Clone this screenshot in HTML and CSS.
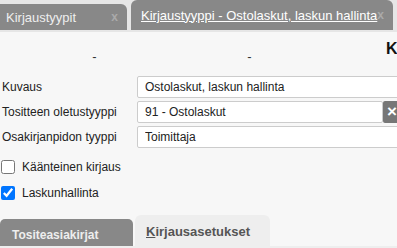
FILE: index.html
```html
<!DOCTYPE html>
<html lang="fi">
<head>
    <meta charset="UTF-8">
    <meta name="viewport" content="width=device-width, initial-scale=1.0">
    <title>Kirjaustyypit</title>
    <link rel="stylesheet" href="styles.css">
</head>
<body>
    <div class="page">
        <div class="tabbar">
            <div class="tab">
                <span class="tab-title">Kirjaustyypit</span>
                <span class="tab-close">x</span>
            </div>
            <div class="tab tab-active">
                <span class="tab-title">Kirjaustyyppi - Ostolaskut, laskun hallinta</span>
                <span class="tab-close">x</span>
            </div>
        </div>

        <div class="summary">
            <div class="summary-cell">-</div>
            <div class="summary-cell">-</div>
            <div class="summary-title">Koko</div>
        </div>

        <div class="form">
            <label class="form-label">Kuvaus</label>
            <div class="field">
                <input class="input" type="text" value="Ostolaskut, laskun hallinta">
            </div>

            <label class="form-label">Tositteen oletustyyppi</label>
            <div class="field">
                <input class="input" type="text" value="91 - Ostolaskut">
                <button class="clear-btn">&times;</button>
            </div>

            <label class="form-label">Osakirjanpidon tyyppi</label>
            <div class="field">
                <input class="input" type="text" value="Toimittaja">
            </div>
        </div>

        <div class="checks">
            <label class="check"><input type="checkbox"> Käänteinen kirjaus</label>
            <label class="check"><input type="checkbox" checked> Laskunhallinta</label>
        </div>

        <div class="subtabs">
            <div class="subtab">Tositeasiakirjat</div>
            <div class="subtab subtab-active"><u>K</u>irjausasetukset</div>
        </div>
    </div>
</body>
</html>
```

FILE: styles.css
```css
* {
    margin: 0;
    padding: 0;
    box-sizing: border-box;
}
body {
    font-family: "Liberation Sans", Arial, sans-serif;
    font-size: 12px;
    color: #222;
    background: #f7f7f7;
    overflow: hidden;
}
.page {
    width: 401px;
}
.tabbar {
    display: flex;
    align-items: flex-end;
    gap: 4px;
    height: 32px;
    padding-bottom: 2px;
    background: #e6e6e6;
}
.tab {
    display: flex;
    align-items: center;
    height: 26px;
    width: 127px;
    padding: 0 9px 0 6px;
    background: #888;
    border-radius: 0 6px 0 0;
    font-size: 13px;
}
.tab-title {
    flex: 1;
    color: #eee;
    white-space: nowrap;
}
.tab-close {
    color: #aaa;
    font-weight: bold;
    font-size: 12px;
}
.tab-active {
    height: 30px;
    width: 262px;
    padding: 0 5px 0 10px;
    border-radius: 6px 6px 0 0;
}
.tab-active .tab-title {
    flex: none;
    color: #fff;
    text-decoration: underline;
}
.summary {
    display: grid;
    grid-template-columns: repeat(3, 155px);
    height: 44px;
    padding: 8px 0 0 17px;
}
.summary-cell {
    text-align: center;
    font-size: 13px;
    line-height: 15px;
    margin-top: 9px;
    color: #333;
}
.summary-title {
    padding-left: 59px;
    font-size: 16px;
    line-height: 18px;
    font-weight: bold;
    color: #111;
    white-space: nowrap;
}
.form {
    display: grid;
    grid-template-columns: 135px 1fr;
    row-gap: 3px;
    padding-left: 2px;
}
.form-label {
    display: flex;
    align-items: center;
}
.field {
    display: flex;
    height: 22px;
}
.input {
    flex: 1;
    min-width: 0;
    height: 22px;
    padding: 0 7px;
    border: 1px solid #ccc;
    border-radius: 2px;
    background: #fff;
    font-family: inherit;
    font-size: 12px;
    color: #222;
}
.clear-btn {
    width: 18px;
    height: 22px;
    border: none;
    border-radius: 2px 0 0 2px;
    background: #777;
    color: #fff;
    font-family: inherit;
    font-size: 17px;
    font-weight: bold;
    line-height: 22px;
}
.checks {
    display: flex;
    flex-direction: column;
    margin-top: 6px;
}
.check {
    display: flex;
    align-items: center;
    gap: 7px;
    height: 26px;
    padding-left: 1px;
}
.check input {
    width: 14px;
    height: 14px;
    margin: 0;
}
.subtabs {
    display: flex;
    align-items: flex-end;
    gap: 2px;
    margin-top: 9px;
    height: 35px;
    border-bottom: 4px solid #eee;
}
.subtab {
    flex: 0 0 133px;
    height: 27px;
    padding: 9px 0 0 12px;
    background: #888;
    border-radius: 5px 5px 0 0;
    color: #eee;
    font-weight: bold;
    font-size: 12px;
}
.subtab-active {
    flex-basis: 135px;
    height: 31px;
    padding-left: 11px;
    background: #eee;
    border-radius: 6px 6px 0 0;
    color: #555;
    font-size: 13px;
}
```
